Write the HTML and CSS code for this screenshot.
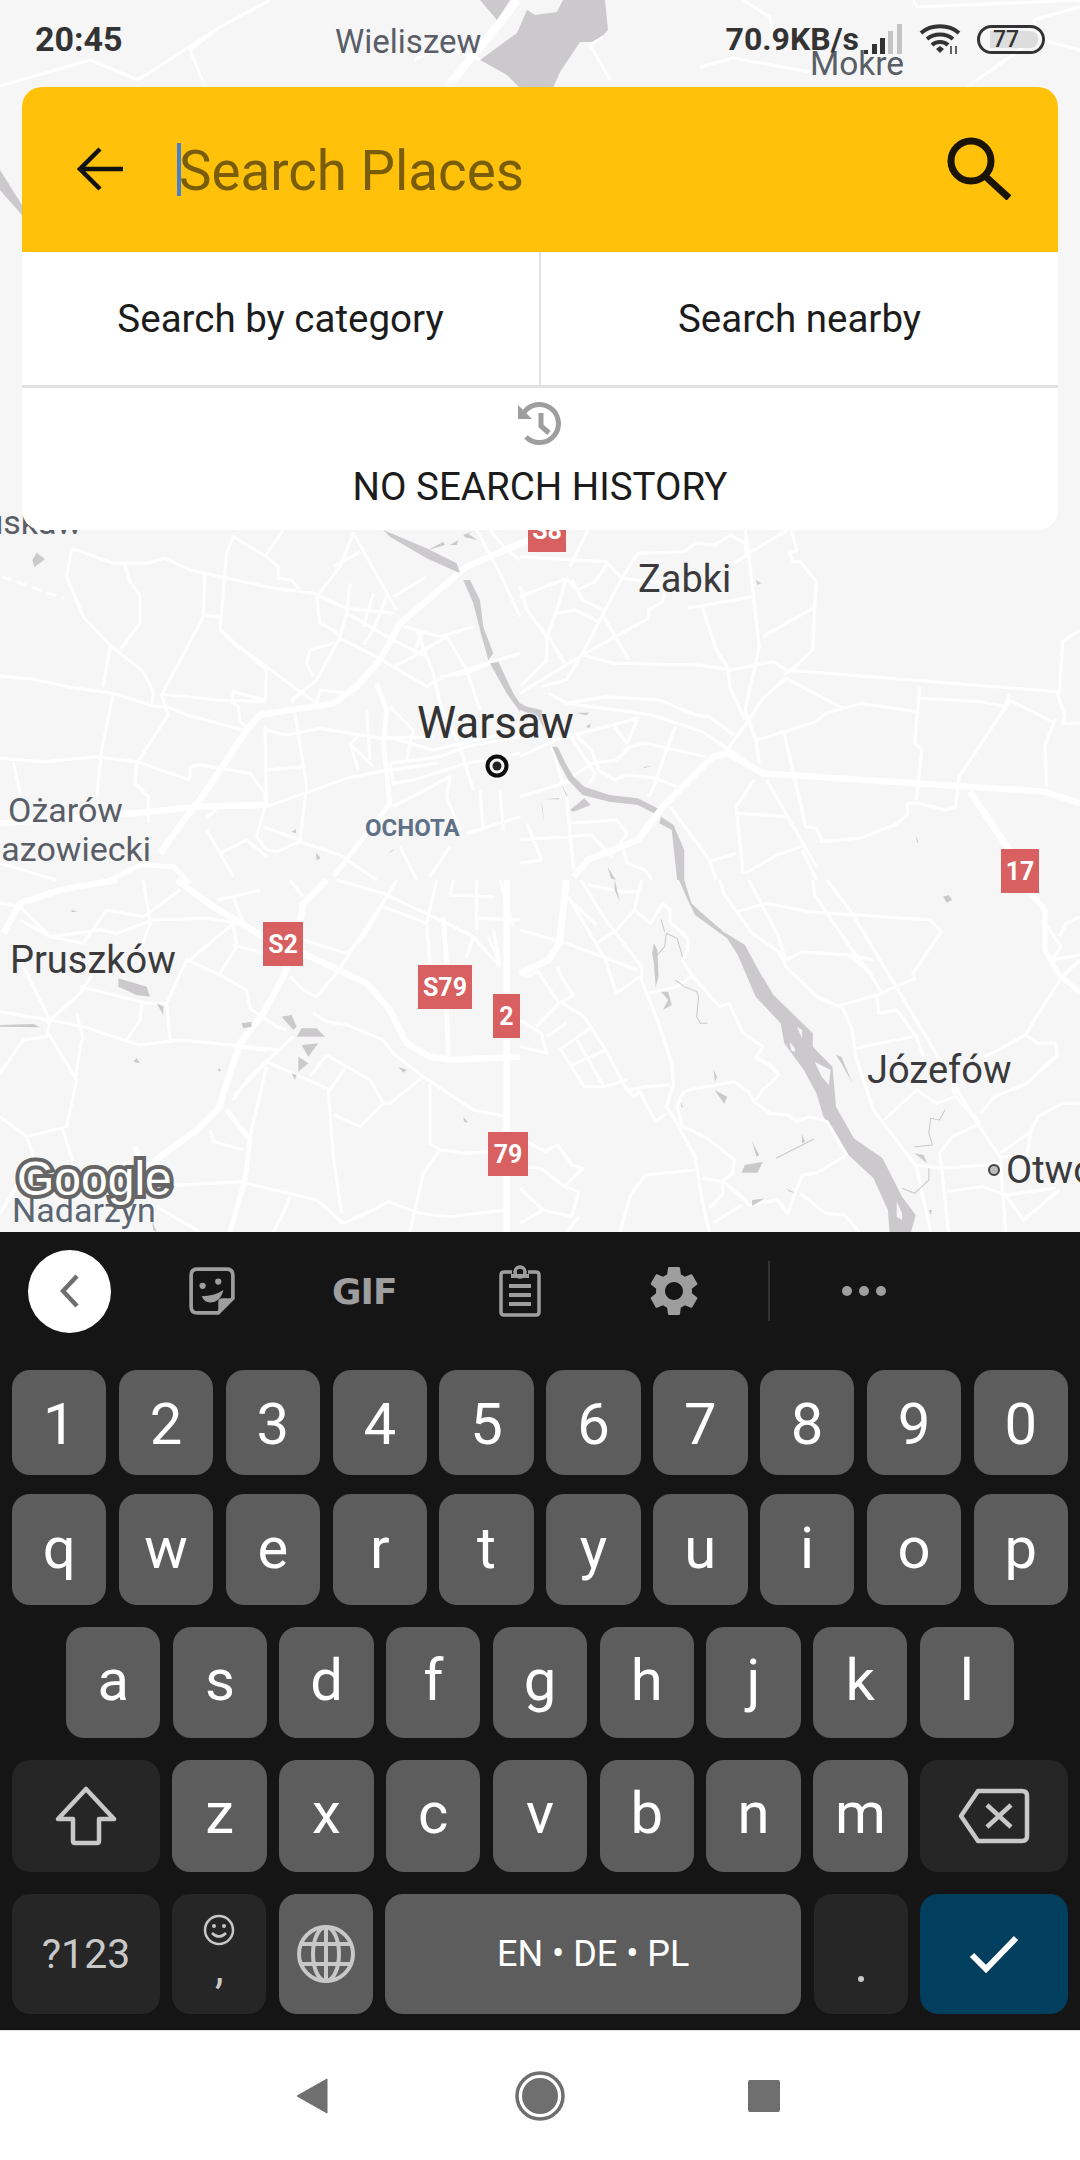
FILE: index.html
```html
<!DOCTYPE html>
<html>
<head>
  <meta charset="UTF-8">
  <meta name="viewport" content="width=device-width, initial-scale=1.0">
  <title>Search Places</title>
  <link rel="stylesheet" href="styles.css">
</head>
<body>
  <div class="map-area">
    <svg class="map" viewBox="0 0 1080 1232" width="1080" height="1232">
      <!-- top strip, page coordinates -->
      <path class="water" d="M440 0L510 0L497 20L480 0ZM480 60L517 33L517 33L527 10L535 15L557 12L563 0L605 0L608 30L597 42L580 42L560 72L553 88L520 88L507 75Z"/>
      <path class="road-mid" style="stroke-width:8" d="M517 0L500 23L447 87"/>
      <path class="road-thin" style="stroke-width:3" d="M0 86L90 60L138 80L220 27L270 0M220 27L190 50L205 87M743 0L770 17L773 37L787 50M913 0L917 7L1080 0M700 67L733 58L810 72M1033 20L1080 7M1033 20L1043 40L1080 50M967 87L1020 50L1033 30M610 80L590 45L603 37M480 60L440 45L415 60"/>
      <path class="water" d="M0 170L22 205L22 215L0 190Z"/>

      <!-- north west tile -->
      <g transform="translate(0 530) scale(.3333)">
        <path class="road-thin" d="M0 438L100 448L200 470L340 490L460 528L500 530L560 555L730 600M215 55L340 100L440 100L495 85L570 120L820 175L940 190L1040 235L1180 250M215 55L200 140L250 260L330 345L430 425L450 465L460 490L455 525M375 105L390 155L420 195L420 280L360 360M330 350L310 470M340 490L305 660L290 800M0 685L130 695L290 680L410 695L570 750M40 695L60 790M410 700L505 555L485 495L610 260L615 135M485 492L650 510L795 515L800 420L660 300L680 70L700 20L800 80L835 110L835 145L875 150L900 180M660 300L700 340L800 410L880 470L950 520M610 255L660 262M795 80L850 0M695 515L700 485L795 510M695 515L715 530L720 570L735 590M410 700L405 760L445 800L445 880M570 750L570 710L600 705L750 730L795 790L795 830L770 920L800 960L830 965L900 935L1020 975M795 590L800 830M885 550L920 770L900 930M800 720L905 710M790 890L900 930M800 830L1040 745L1140 725L1310 700M800 600L860 615L960 595L1140 625L1300 620M880 520L875 510L950 450L1010 340L1020 325L1120 375L1280 470L1330 440L1560 370M950 520L960 480L1050 490M940 440L920 400L930 360L1000 340M1020 320L1000 300L960 280L950 200L1020 110L1060 10L1190 240M1000 110L1080 65M1050 160L1040 250L1180 330L1280 380M1180 200L1280 140M1120 190L1090 290M1160 200L1120 300L1090 345M1040 250L1020 320M1210 290L1320 320L1420 290M1250 300L1300 430L1320 520L1380 650L1420 780M1180 410L1240 380L1340 320L1400 420L1440 540M1320 440L1400 430L1470 400M1160 620L1300 660L1560 600M1170 700L1320 680L1400 650L1560 620M1120 710L1050 640L1075 620M1075 720L1060 670L1050 640M1100 540L1110 690M1170 530L1240 600L1220 690M1170 700L1180 760L1240 750L1400 700L1560 670M1180 830L1350 740L1340 800L1380 900M1440 780L1450 900M1500 780L1510 900M1400 910L1560 860M1290 1040L1350 950M1270 300L1240 370M1560 90L1520 60L1470 0M1560 260L1500 130L1430 0M620 860L650 840M660 970L740 930L800 980M620 900L660 970L700 1040M1020 975L1130 1050M1200 950L1250 1050M170 1050L0 1000"/>
        <path class="road-wide" d="M1620 15L1400 110L1200 280L1140 390L1070 470L1000 520L780 555L740 600L600 810L560 860L480 970M0 880L400 850L600 830L800 825"/>
        <path class="road-mid" d="M1130 460L1160 540L1150 640L1170 820L1000 1040M330 1050L420 1005L520 1010L570 1060"/>
        <path class="road-thin" style="stroke-dasharray:30 18" d="M5 140L190 205"/>
        <path class="water" d="M97 90L110 68L135 88L103 112ZM1150 0L1280 55L1370 100L1380 130L1280 85L1170 20ZM1390 150L1410 150L1440 210L1450 290L1480 370L1465 390L1440 300L1420 220ZM1470 400L1495 395L1540 490L1560 520L1560 545L1520 490ZM875 905L888 898L888 910ZM948 968L962 985L950 990ZM1165 970L1185 955L1175 965ZM1285 60L1330 35L1335 45ZM1350 45L1375 30L1370 45ZM1390 15L1425 2L1405 12L1432 30L1395 22Z"/>
      </g>

      <!-- north east tile -->
      <g transform="translate(520 530) scale(.3571 .3333)">
        <path class="road-thin" d="M0 80L240 95L285 145L400 160M0 200L130 145L160 180L210 155L245 100M130 145L100 250L75 320L20 240L0 170M285 145L175 370L130 450L60 470M140 110L190 0M330 70L285 145M330 70L460 65L490 40L545 45L590 15L630 40L635 75L600 100M640 70L750 0M630 0L640 70L670 350L660 400L630 540L660 630L670 700M760 0L775 60L755 70L765 95L785 95L830 155L825 230L820 360L760 420L740 435M680 320L820 235M470 235L650 200M510 230L550 360L580 410L590 480L605 510L630 570M175 375L260 400L500 405L590 420L710 395L745 420L1505 485M0 490L175 375L360 265L360 240L400 215L405 190M80 320L125 400M235 260L305 390M100 250L155 240L220 275M75 320L75 390L0 470M175 210L235 240M145 150L175 210M80 490L130 520L240 500L390 510L490 555L530 560L600 615M130 520L370 555L510 605L640 700M745 445L905 535M745 445L680 505L640 570L580 660M665 630L830 575L855 550L955 520L1110 545M1120 470L1105 640L1125 660L1110 810M1120 505L1290 515L1360 530L1370 490M1370 510L1490 575M1370 515L1230 740L1220 830L1195 840L1115 820L1085 820L1085 855L1050 885L950 925L840 935M1510 490L1520 335L1568 300M1505 490L1525 555L1520 580L1568 580M1500 565L1470 645L1475 770M740 610L800 890L830 895L845 930M610 850L750 860M655 750L605 830L625 1030M690 750L830 1010M605 970L530 995M420 830L530 990L550 1050M630 1030L720 975L800 945M0 680L100 630L330 565L300 640L265 590M290 660L310 650L350 640L520 680M435 590L410 660L375 770L360 800M100 770L205 700L270 690L310 650M220 720L265 750L300 735L380 745L440 770M130 600L210 730L195 760M160 620L200 660L220 720M90 650L130 800L150 1020M0 800L120 760L150 750M135 880L270 870L300 910L280 940M0 930L200 915L260 985M20 880L60 990M0 1000L60 990M290 960L300 1000L350 1020L370 1050M790 960L830 1050"/>
        <path class="road-wide" d="M150 1040L190 990L330 930L400 830L540 680L580 670L680 730L1470 785L1568 820M1260 785L1370 960"/>
        <path class="water" d="M90 650L105 650L130 705L150 740L180 770L250 795L330 805L385 835L375 850L330 825L250 815L175 795L135 750L110 700ZM395 860L430 885L460 960L460 1050L440 1050L425 900L390 880ZM140 840L180 805L198 825L150 845ZM115 760L135 800L128 795ZM60 810L68 875L62 840ZM70 808L110 804L110 808ZM155 548L195 548L185 556ZM185 590L198 580L195 595ZM350 710L368 708L345 715ZM660 150L675 160L665 165ZM1108 915L1115 935L1112 940ZM245 1010L268 1050L255 1045ZM0 520L20 530L60 540L70 600L50 560L0 540Z"/>
      </g>

      <!-- south west tile -->
      <g transform="translate(0 880) scale(.3333)">
        <path class="road-thin" d="M0 70L60 80L150 170L250 190L320 90L430 110L540 30M60 120L150 170L300 150L350 160L460 120L620 115L720 130M430 0L450 130L420 215M0 395L150 420L250 440L370 480L420 495L540 480L640 490L840 510M240 320L440 370L500 370L560 240L650 280L740 330L750 385L830 440L860 450M140 430L240 340L280 280M230 400L250 480M500 370L510 480M380 480L420 420L425 370M145 460L230 600L200 740L80 770L0 710M70 260L150 420L140 470M245 480L225 600M0 580L70 480L140 470M185 740L230 880M80 770L100 830M570 240L700 130L710 200L660 280M700 195L790 220M700 50L730 130M650 60L700 50L780 30M870 290L910 330L950 350L1010 280L1160 50M910 180L1040 220L1090 170L1190 0M1150 80L1280 130M1010 0L1150 40L1320 120L1420 170L1500 260M1310 0L1280 130L1290 250M1350 45L1360 0M1350 45L1480 50M1430 0L1430 150M1500 0L1540 140M1420 170L1400 230M1430 115L1560 120M1465 170L1500 250L1480 150M940 400L980 425L1040 435L1150 480L1180 520L1270 590L1420 690L1520 710M1270 590L1170 670L1150 670L1110 600L980 525L930 590M1035 565L990 630L800 545L700 650M880 470L750 590L700 660M800 560L750 770M985 630L1000 830L1025 1000M1000 705L1080 740L1150 670M1290 610L1290 790L1320 810L1390 820L1465 815M1320 810L1270 880L1230 1056M630 750L640 785L730 810M440 920L720 905L950 960L1030 1030M470 980L600 1056M870 950L850 1000L820 1056M1030 1030L1120 990L1165 965L1260 1000L1350 1010L1520 990M700 500L800 510M870 0L910 50M0 1000L60 900"/>
        <path class="road-wide" d="M10 160L60 70L180 30L350 0M530 0L640 80L790 170L910 220L1100 310L1170 390L1220 490L1290 530L1350 540L1560 530M980 0L910 70L900 130L850 290L790 400L720 490L670 640L660 680L590 750L440 860M1520 0L1520 1056"/>
        <path class="road-mid" d="M680 690L750 780L735 900L690 1056M1330 110L1340 250M1340 390L1345 530M405 800L420 840"/>
        <path class="water" d="M355 295L440 320L450 350L410 345L355 320ZM470 370L490 380L490 405ZM725 430L755 425L755 440L730 445ZM845 410L875 405L890 440L880 450ZM905 445L950 445L975 470L890 470ZM905 495L955 490L925 530ZM895 530L925 550L895 575ZM875 580L890 585L885 600ZM1195 560L1220 570L1210 578ZM400 545L410 535L420 550ZM655 565L665 570L655 575ZM1390 710L1405 728L1392 725ZM0 435L100 432L120 442L0 440ZM215 90L232 95L215 97ZM455 1020L470 1056L460 1050Z"/>
      </g>

      <!-- south east tile -->
      <g transform="translate(520 880) scale(.3571 .3333)">
        <path class="water" d="M445 0L470 60L490 105L580 175L610 225L660 350L730 430L740 490L795 570L830 640L850 710L920 825L990 895L1030 990L1035 1056L1095 1056L1108 1005L1070 950L1015 835L935 775L885 680L875 560L820 500L820 460L705 340L665 265L630 195L570 155L505 95L480 70L460 0Z"/>
        <path class="island" d="M775 440L790 450L790 475ZM755 485L770 505L770 515L760 512ZM825 545L870 570L865 615L845 590ZM1055 965L1070 1000L1070 1020L1055 1010Z"/>
        <path class="road-thin" d="M0 150L130 190L330 270M320 90L270 150L215 190M140 60L215 135M135 50L240 240L270 340L335 290M170 0L240 120L340 260L340 300M320 90L340 0M190 15L290 35L330 35M320 90L365 130L400 70L420 90L420 125L470 175L470 210L455 240L480 285L560 380L585 370L625 460L680 500L660 535L700 555L725 585L680 630L655 665L700 700L750 705L775 725L810 710L860 725L915 825M340 300L385 420L425 550L430 610L410 680L440 730L490 830L510 960L530 1056M360 340L440 320L480 290M0 280L20 290L50 275L110 370L150 345L115 290L105 260M0 420L60 460L75 520L0 500M120 370L180 410L240 510L300 630L320 650L335 635L380 725L410 700M110 370L45 440M130 430L75 470M195 445L110 510M240 510L145 555M115 510L180 620L235 620L300 600M160 480L235 620M300 630L350 620L420 615M440 730L525 775L600 840L595 880L565 905L570 940L530 985M455 640L470 630L600 605L640 635L655 665M455 640L440 680L455 740M350 885L490 870M510 895L570 905L630 960L640 975L720 960L750 1000L790 885L830 880L915 825M785 940L855 1000L910 1005L950 1056M540 1030L620 975M350 885L310 945L280 1056M560 0L570 40L650 160L725 215L745 260L830 350L905 385L930 450L940 530L990 690L1110 860L1130 960L1150 1056M640 0L720 160L745 240M610 95L690 70L810 95L1150 120L1180 155L1100 280L1105 295L1000 345L885 380M820 0L825 45L930 210L980 280L1010 335M860 0L930 100L1170 530L1280 730L1350 840M1345 840L1360 1056M745 240L790 215L920 225L990 240M920 225L985 280M1000 350L1005 400L1055 390L1110 470L1130 530M940 505L1100 470M1020 720L1110 630L1165 670L1220 650L1290 730M1290 730L1210 770L1175 820L1180 860L1200 1056M1105 855L1180 865L1300 855L1340 850M1195 935L1295 920L1360 945L1500 925M1345 820L1430 755L1450 710L1520 670L1568 670M1430 760L1420 830L1350 830M1360 945L1410 1020L1510 930M1290 700L1330 650L1420 610L1505 525L1500 490L1450 490L1415 465L1470 370L1515 295L1568 240M1415 465L1330 515L1300 530M1470 130L1515 200L1490 240M1490 240L1568 225M1510 170L1530 130L1568 110M20 785L70 815L105 795L145 855L175 865L125 920L60 865L0 860M125 920L165 935L145 1010L65 990L0 925M65 990L0 1030M165 1010L130 1056M1220 650L1210 620"/>
        <path class="road-mid" d="M1430 40L1470 90L1470 210L1510 285L1568 335"/>
        <path class="road-wide" d="M130 0L110 190L80 240L0 280"/>
        <path class="water" d="M265 0L280 65L265 30ZM395 335L415 335L425 375L400 390L415 360ZM542 570L552 590L546 605ZM545 630L580 650L572 672ZM450 665L458 685L452 680ZM650 785L670 825L662 830ZM620 878L630 855L680 845L665 878ZM650 960L685 955L650 978ZM745 925L770 938L755 935ZM790 762L798 785L790 790ZM885 525L900 530L932 612L900 550ZM1185 50L1200 45L1210 60L1195 68ZM1105 820L1130 825L1140 850ZM1145 990L1153 990L1150 1005ZM370 220L375 190L385 210L388 290L380 320L375 250Z"/>
        <path class="creek" d="M395 118L405 155M385 225L405 200L410 160L440 175L455 230M435 300L460 320L495 335L500 350L495 410L505 430L525 430M717 835L822 778M1105 800L1155 795L1145 760L1150 715L1175 720L1190 690M1070 925L1105 940L1145 900L1145 865M680 295L705 340"/>
      </g>

      <g transform="translate(497 766)">
        <circle r="11.5" fill="#0c0c0c"/>
        <circle r="7.5" fill="#f4f4f4"/>
        <circle r="4.5" fill="#222"/>
      </g>
      <circle cx="994" cy="1170" r="5" fill="#bbb" stroke="#444" stroke-width="2"/>
    </svg>

    <span class="place place-dim wieliszew">Wieliszew</span>
    <span class="place place-dim mokre">Mokre</span>
    <span class="place place-dim truskaw">Truskaw</span>
    <span class="place zabki">Zabki</span>
    <span class="place warsaw">Warsaw</span>
    <span class="place place-dim ozarow">Ożarów</span>
    <span class="place place-dim mazowiecki">Mazowiecki</span>
    <span class="place pruszkow">Pruszków</span>
    <span class="place jozefow">Józefów</span>
    <span class="place otwock">Otwock</span>
    <span class="place place-dim nadarzyn">Nadarzyn</span>
    <span class="ochota">OCHOTA</span>

    <span class="shield s8">S8</span>
    <span class="shield s2">S2</span>
    <span class="shield s79">S79</span>
    <span class="shield r2">2</span>
    <span class="shield r79">79</span>
    <span class="shield r17">17</span>

    <span class="google">Google</span>

    <div class="status">
      <span class="clock">20:45</span>
      <div class="status-right">
        <span class="speed">70.9KB/s</span>
        <svg class="signal" viewBox="0 0 38 30" width="38" height="30">
          <rect x="0" y="26" width="4" height="4" fill="#333"/>
          <rect x="8" y="20" width="5" height="10" fill="#333"/>
          <rect x="16" y="14" width="5" height="16" fill="#333"/>
          <rect x="24" y="7" width="5" height="23" fill="#c4c4c4"/>
          <rect x="33" y="0" width="5" height="30" fill="#c4c4c4"/>
        </svg>
        <svg class="wifi" viewBox="0 0 42 30" width="42" height="30">
          <path d="M2 9C12 0 30 0 40 9M8 15C15 9 27 9 34 15M13 21C17 17 25 17 29 21" fill="none" stroke="#333" stroke-width="4"/>
          <path d="M17 25L21 22L25 25L21 29Z" fill="#333"/>
          <path d="M32 22V30M37 22V30" stroke="#333" stroke-width="1.5"/>
        </svg>
        <div class="battery"><span class="battery-fill">77</span></div>
      </div>
    </div>

    <div class="card">
      <div class="search-bar">
        <svg class="back-arrow" viewBox="0 0 46 44" width="46" height="44">
          <path d="M46 22H4M23 2L3 22L23 42" fill="none" stroke="#111" stroke-width="4.5"/>
        </svg>
        <div class="search-input"><span class="caret"></span><span class="placeholder">Search Places</span></div>
        <svg class="search-icon" viewBox="0 0 64 64" width="64" height="64">
          <circle cx="24" cy="25" r="20" fill="none" stroke="#1a1405" stroke-width="7"/>
          <path d="M38 40L62 62" stroke="#1a1405" stroke-width="7"/>
        </svg>
      </div>
      <div class="search-options">
        <div class="option">Search by category</div>
        <div class="option">Search nearby</div>
      </div>
      <div class="history">
        <svg class="history-icon" viewBox="0 0 46 44" width="46" height="44">
          <path d="M5 14A19 19 0 1 1 9 35" fill="none" stroke="#9e9e9e" stroke-width="5"/>
          <path d="M1 3L1 17L15 17Z" fill="#9e9e9e"/>
          <path d="M24 11V24L32 31" fill="none" stroke="#9e9e9e" stroke-width="5"/>
        </svg>
        <div class="history-text">NO SEARCH HISTORY</div>
      </div>
    </div>
  </div>

  <div class="keyboard">
    <div class="toolbar">
      <div class="collapse">
        <svg viewBox="0 0 20 34" width="20" height="34"><path d="M17 2L3 17L17 32" fill="none" stroke="#6f6f6f" stroke-width="4.5"/></svg>
      </div>
      <svg class="tool sticker" viewBox="0 0 44 46" width="46" height="48">
        <path d="M8 2H36Q42 2 42 8V30L28 44H8Q2 44 2 38V8Q2 2 8 2Z" fill="none" stroke="#9e9e9e" stroke-width="3.5"/>
        <path d="M42 30H32Q28 30 28 34V44Z" fill="#9e9e9e"/>
        <circle cx="13" cy="18" r="3" fill="#9e9e9e"/>
        <circle cx="28" cy="14" r="3" fill="#9e9e9e"/>
        <path d="M12 28Q24 28 33 22Q30 34 20 34Q15 34 12 28Z" fill="#9e9e9e"/>
      </svg>
      <span class="tool gif">GIF</span>
      <svg class="tool clipboard" viewBox="0 0 42 52" width="42" height="52">
        <path d="M13 7H5Q2 7 2 10V47Q2 50 5 50H37Q40 50 40 47V10Q40 7 37 7H29" fill="none" stroke="#9e9e9e" stroke-width="3.5"/>
        <circle cx="21" cy="7" r="5" fill="none" stroke="#9e9e9e" stroke-width="3.5"/>
        <path d="M12 9H30V13H12ZM10 19H32V23H10ZM10 28H32V32H10ZM10 37H32V41H10Z" fill="#9e9e9e"/>
      </svg>
      <svg class="tool gear" viewBox="0 0 24 24" width="60" height="60">
        <path fill="#9e9e9e" d="M19.14 12.94c.04-.3.06-.61.06-.94 0-.32-.02-.64-.07-.94l2.03-1.58a.49.49 0 0 0 .12-.61l-1.92-3.32a.488.488 0 0 0-.59-.22l-2.39.96c-.5-.38-1.03-.7-1.62-.94l-.36-2.54a.484.484 0 0 0-.48-.41h-3.84c-.24 0-.43.17-.47.41l-.36 2.54c-.59.24-1.13.57-1.62.94l-2.39-.96c-.22-.08-.47 0-.59.22L2.74 8.87c-.12.21-.08.47.12.61l2.03 1.58c-.05.3-.09.63-.09.94s.02.64.07.94l-2.03 1.58a.49.49 0 0 0-.12.61l1.92 3.32c.12.22.37.29.59.22l2.39-.96c.5.38 1.03.7 1.62.94l.36 2.54c.05.24.24.41.48.41h3.84c.24 0 .44-.17.47-.41l.36-2.54c.59-.24 1.13-.56 1.62-.94l2.39.96c.22.08.47 0 .59-.22l1.92-3.32c.12-.22.07-.47-.12-.61l-2.01-1.58zM12 15.6c-1.98 0-3.6-1.62-3.6-3.6s1.62-3.6 3.6-3.6 3.6 1.62 3.6 3.6-1.62 3.6-3.6 3.6z"/>
      </svg>
      <span class="tool-divider"></span>
      <div class="tool dots"><i></i><i></i><i></i></div>
    </div>

    <div class="key-row row-digits">
      <div class="key">1</div><div class="key">2</div><div class="key">3</div><div class="key">4</div><div class="key">5</div><div class="key">6</div><div class="key">7</div><div class="key">8</div><div class="key">9</div><div class="key">0</div>
    </div>
    <div class="key-row row-top">
      <div class="key">q</div><div class="key">w</div><div class="key">e</div><div class="key">r</div><div class="key">t</div><div class="key">y</div><div class="key">u</div><div class="key">i</div><div class="key">o</div><div class="key">p</div>
    </div>
    <div class="key-row row-home">
      <div class="key">a</div><div class="key">s</div><div class="key">d</div><div class="key">f</div><div class="key">g</div><div class="key">h</div><div class="key">j</div><div class="key">k</div><div class="key">l</div>
    </div>
    <div class="key-row row-bottom">
      <div class="key key-dark key-wide">
        <svg viewBox="0 0 62 60" width="62" height="60"><path d="M31 3L59 33H44V55Q44 57 42 57H20Q18 57 18 55V33H3Z" fill="none" stroke="#c8c8c8" stroke-width="4.5" stroke-linejoin="round"/></svg>
      </div>
      <div class="key">z</div><div class="key">x</div><div class="key">c</div><div class="key">v</div><div class="key">b</div><div class="key">n</div><div class="key">m</div>
      <div class="key key-dark key-wide">
        <svg viewBox="0 0 72 56" width="72" height="56"><path d="M20 3H64Q69 3 69 8V48Q69 53 64 53H20L3 28Z" fill="none" stroke="#c8c8c8" stroke-width="4.5" stroke-linejoin="round"/><path d="M29 17L53 39M53 17L29 39" stroke="#c8c8c8" stroke-width="4.5"/></svg>
      </div>
    </div>
    <div class="key-row row-space">
      <div class="key key-dark key-wide symbols">?123</div>
      <div class="key key-dark emoji-key">
        <svg viewBox="0 0 32 32" width="32" height="32"><circle cx="16" cy="16" r="14" fill="none" stroke="#c8c8c8" stroke-width="2.5"/><circle cx="11" cy="12" r="2" fill="#c8c8c8"/><circle cx="21" cy="12" r="2" fill="#c8c8c8"/><path d="M9 19Q16 26 23 19" fill="none" stroke="#c8c8c8" stroke-width="2.5"/></svg>
        <span class="comma">,</span>
      </div>
      <div class="key">
        <svg viewBox="0 0 60 60" width="60" height="60"><g fill="none" stroke="#c8c8c8" stroke-width="4"><circle cx="30" cy="30" r="27"/><ellipse cx="30" cy="30" rx="13" ry="27"/><path d="M30 3V57M5 20H55M5 40H55"/></g></svg>
      </div>
      <div class="key key-space">EN • DE • PL</div>
      <div class="key key-dark period-key"><span></span></div>
      <div class="key key-go key-wide">
        <svg viewBox="0 0 50 38" width="50" height="38"><path d="M3 20L17 34L47 3" fill="none" stroke="#fff" stroke-width="6"/></svg>
      </div>
    </div>
  </div>

  <div class="nav-bar">
    <svg viewBox="0 0 32 36" width="32" height="36"><path d="M31 1V35L1 18Z" fill="#6f6f6f" stroke="#6f6f6f" stroke-linejoin="round"/></svg>
    <svg class="nav-home" viewBox="0 0 50 50" width="50" height="50"><circle cx="25" cy="25" r="23" fill="none" stroke="#6f6f6f" stroke-width="3.5"/><circle cx="25" cy="25" r="18" fill="#6f6f6f"/></svg>
    <div class="nav-square"></div>
  </div>
</body>
</html>
```
FILE: styles.css
```css
* {
  box-sizing: border-box;
}

body {
  margin: 0;
  width: 1080px;
  height: 2160px;
  overflow: hidden;
  font-family: Roboto, "Liberation Sans", sans-serif;
  background-color: #ffffff;
}

/* map */
.map-area {
  position: relative;
  height: 1232px;
  overflow: hidden;
  background-color: #f6f6f7;
}

.map {
  position: absolute;
  top: 0;
  left: 0;
}

.road-thin,
.road-mid,
.road-wide {
  fill: none;
  stroke: #ffffff;
  stroke-linejoin: round;
}

.road-thin { stroke-width: 9; }
.road-mid { stroke-width: 14; }
.road-wide { stroke-width: 19; }

.water { fill: #cbc9cc; }
.island { fill: #f6f6f7; }

.creek {
  fill: none;
  stroke: #cbc9cc;
  stroke-width: 3;
}

.place {
  position: absolute;
  line-height: 1;
  font-size: 38px;
  color: #3b3b3d;
  white-space: nowrap;
  text-shadow: 0 0 3px #f6f6f7, 0 0 3px #f6f6f7;
}

.place-dim { color: #5a5e66; }

.wieliszew { left: 335px; top: 25px; font-size: 33px; }
.mokre { left: 810px; top: 47px; font-size: 33.5px; }
.truskaw { right: 998px; top: 505px; font-size: 34px; }
.zabki { left: 638px; top: 560px; }
.warsaw { left: 417px; top: 701px; font-size: 44px; color: #333333; }
.ozarow { left: 8px; top: 793px; font-size: 34px; }
.mazowiecki { right: 929px; top: 832px; font-size: 34px; }
.pruszkow { left: 10px; top: 941px; }
.jozefow { left: 867px; top: 1051px; }
.otwock { left: 1006px; top: 1151px; }
.nadarzyn { left: 12px; top: 1193px; font-size: 34px; color: #5c6672; }

.ochota {
  position: absolute;
  left: 365px;
  top: 816px;
  font-size: 24px;
  font-weight: 700;
  line-height: 1;
  color: #5f7186;
}

.shield {
  position: absolute;
  display: flex;
  align-items: center;
  justify-content: center;
  height: 44px;
  font-size: 25px;
  font-weight: 700;
  color: #ffffff;
  background-color: #d96060;
}

.s8 { left: 528px; top: 508px; width: 38px; }
.s2 { left: 263px; top: 922px; width: 40px; }
.s79 { left: 418px; top: 965px; width: 54px; }
.r2 { left: 493px; top: 994px; width: 27px; }
.r79 { left: 488px; top: 1132px; width: 40px; }
.r17 { left: 1001px; top: 849px; width: 38px; }

.google {
  position: absolute;
  left: 17px;
  top: 1155px;
  font-family: "Liberation Sans", sans-serif;
  font-size: 48px;
  line-height: 1;
  color: #ffffff;
  -webkit-text-stroke: 8px #666666;
  paint-order: stroke fill;
}

/* status bar */
.status {
  position: absolute;
  top: 20px;
  left: 35px;
  right: 35px;
  display: flex;
  justify-content: space-between;
  align-items: center;
  height: 38px;
  color: #333333;
  font-size: 32px;
  font-weight: 700;
}

.clock { font-size: 34px; }

.status-right {
  display: flex;
  align-items: center;
}

.speed { margin-right: 5px; font-size: 32px; }
.signal { margin-right: 17px; }
.wifi { margin-right: 16px; }

.battery {
  display: flex;
  align-items: center;
  justify-content: flex-end;
  width: 68px;
  height: 29px;
  padding: 3px 4px;
  border: 3px solid #333333;
  border-radius: 15px;
}

.battery-fill {
  width: 48px;
  height: 17px;
  padding-left: 3px;
  border-radius: 0 8px 8px 0;
  background-color: #dddddd;
  font-size: 23px;
  line-height: 17px;
  font-weight: 500;
}

/* search card */
.card {
  position: absolute;
  top: 87px;
  left: 22px;
  width: 1036px;
  height: 443px;
  background-color: #ffffff;
  border-radius: 20px;
  overflow: hidden;
}

.search-bar {
  display: flex;
  align-items: center;
  height: 165px;
  padding: 0 47px 0 55px;
  background-color: #ffc10a;
}

.back-arrow {
  margin-top: -1px;
}

.search-input {
  flex: 1;
  display: flex;
  align-items: center;
  margin-left: 54px;
}

.caret {
  width: 4px;
  height: 53px;
  background-color: #4a7fd0;
}

.placeholder {
  padding-top: 2px;
  font-size: 54.7px;
  margin-left: -2px;
  color: #7a5d08;
}

.search-icon {
  margin-top: -3px;
}

.search-options {
  display: flex;
  height: 136px;
  border-bottom: 3px solid #e2e2e2;
}

.option {
  flex: 1;
  display: flex;
  align-items: center;
  justify-content: center;
  font-size: 38.5px;
  color: #1c1c1c;
}

.option + .option {
  border-left: 2px solid #e2e2e2;
}

.history {
  display: flex;
  flex-direction: column;
  align-items: center;
  padding-top: 14px;
}

.history-text {
  margin-top: 18px;
  font-size: 38.5px;
  line-height: 46px;
  color: #1c1c1c;
}

/* keyboard */
.keyboard {
  height: 798px;
  background-color: #151515;
  padding: 0 12px;
}

.toolbar {
  height: 138px;
  display: flex;
  align-items: center;
  padding-bottom: 20px;
}

.collapse {
  display: flex;
  align-items: center;
  justify-content: center;
  width: 83px;
  height: 83px;
  margin-left: 16px;
  border-radius: 50%;
  background-color: #ffffff;
}

.tool { flex-shrink: 0; }
.sticker { margin-left: 78px; }

.gif {
  margin-left: 97px;
  font-family: "DejaVu Sans", sans-serif;
  font-size: 36px;
  font-weight: 700;
  color: #9e9e9e;
  letter-spacing: -1px;
}

.clipboard { margin-left: 102px; }
.gear { margin-left: 103px; }

.tool-divider {
  width: 2px;
  height: 60px;
  margin-left: 64px;
  background-color: #333333;
}

.dots {
  display: flex;
  gap: 7px;
  margin-left: 72px;
}

.dots i {
  width: 10px;
  height: 10px;
  border-radius: 50%;
  background-color: #9e9e9e;
}

.key-row {
  display: flex;
  gap: 12.4px;
}

.row-digits { height: 105px; margin-bottom: 19px; }
.row-top { height: 111px; margin-bottom: 22px; }
.row-home { height: 111px; margin-bottom: 22px; padding: 0 54px; }
.row-bottom { height: 112px; margin-bottom: 22px; }
.row-space { height: 120px; }

.key {
  flex: 1 1 0;
  display: flex;
  align-items: center;
  justify-content: center;
  border-radius: 18px;
  background-color: #5d5d5d;
  color: #ffffff;
  font-size: 58px;
}

.row-digits .key { padding-top: 3px; }
.row-top .key { padding-bottom: 4px; }
.row-home .key,
.row-bottom .key { padding-bottom: 6px; }
.row-bottom .key-wide { padding-bottom: 0; }

.key-dark { background-color: #262626; }
.key-go { background-color: #023e5e; }
.key-wide { flex: 0 0 148px; }

.symbols {
  font-size: 41px;
  color: #c8c8c8;
}

.emoji-key {
  flex-direction: column;
  justify-content: flex-start;
  padding-top: 20px;
}

.comma {
  font-size: 44px;
  line-height: 44px;
  color: #c8c8c8;
  margin-top: 0;
}

.key-space {
  flex: 0 0 416px;
  font-size: 36px;
}

.period-key {
  align-items: flex-end;
  padding-bottom: 32px;
}

.period-key span {
  width: 6px;
  height: 6px;
  border-radius: 50%;
  background-color: #c8c8c8;
}

/* navigation bar */
.nav-bar {
  display: flex;
  align-items: center;
  height: 130px;
  padding-left: 296px;
  border-top: 1px solid #dddddd;
  background-color: #ffffff;
}

.nav-home {
  margin-left: 187px;
}

.nav-square {
  width: 32px;
  height: 32px;
  margin-left: 183px;
  border-radius: 2px;
  background-color: #6f6f6f;
}
```
